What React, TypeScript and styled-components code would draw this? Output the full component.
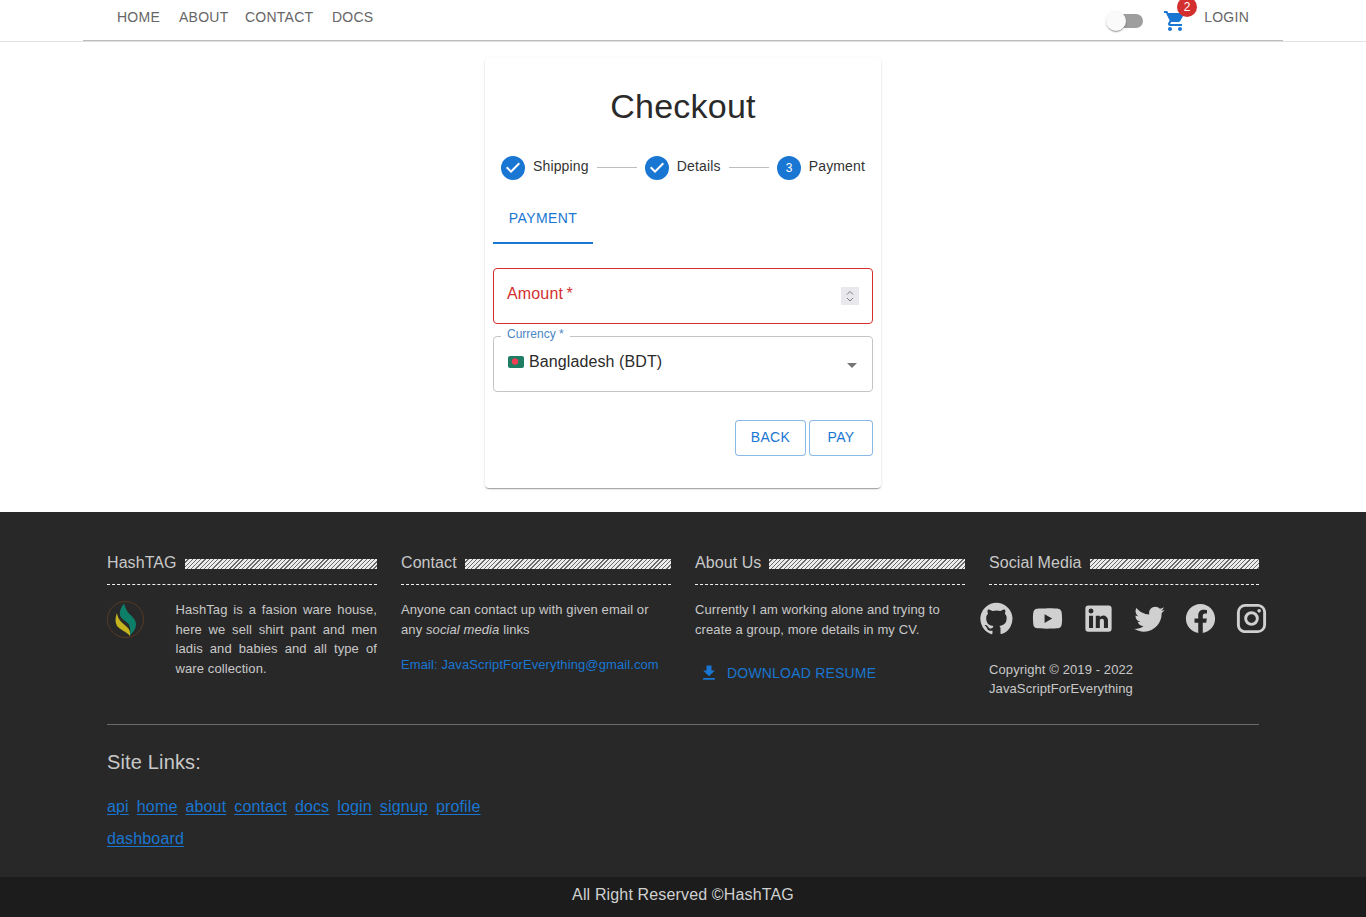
import React from "react";
import styled, { createGlobalStyle } from "styled-components";

const Global = createGlobalStyle`
  html, body { margin: 0; padding: 0; background: #fff; }
  body { font-family: "Liberation Sans", Arial, sans-serif; color: rgba(0,0,0,.87); }
  * { box-sizing: border-box; }
`;

const Page = styled.div`display: flex; flex-direction: column; min-height: 917px;`;

const HeaderBar = styled.header`height: 42px; border-bottom: 1px solid #e0e0e0;`;
const HeaderInner = styled.div`
  width: 1200px; height: 41px; margin: 0 auto; padding: 0 34px;
  border-bottom: 1px solid #bdbdbd;
  display: flex; align-items: flex-start; justify-content: space-between;
`;
const NavLinks = styled.nav`display: flex; height: 34px; align-items: center;`;
const NavLink = styled.a<{ $w: number }>`
  width: ${(p) => p.$w}px; font-size: 14px; letter-spacing: .25px; color: #666; white-space: nowrap;
`;
const HeaderRight = styled.div`display: flex; align-items: flex-start; position: relative; height: 40px;`;
const Toggle = styled.span`
  position: relative; display: block; width: 34px; height: 14px; margin: 14px 20px 0 0;
  background: #9e9e9e; border-radius: 7px;
`;
const Thumb = styled.span`
  position: absolute; left: -3px; top: -3px; width: 20px; height: 20px; border-radius: 50%;
  background: #fafafa; box-shadow: 0 2px 1px -1px rgba(0,0,0,.2), 0 1px 1px rgba(0,0,0,.14), 0 1px 3px rgba(0,0,0,.12);
`;
const CartWrap = styled.span`position: relative; display: block; width: 24px; height: 24px; margin: 9px 17px 0 0; color: #1976d2;`;
const Badge = styled.span`
  position: absolute; left: 14px; top: -12px; width: 20px; height: 20px; border-radius: 50%;
  background: #d32f2f; color: #fff; font-size: 12px; line-height: 20px; text-align: center;
`;
const Login = styled.a`font-size: 14px; letter-spacing: .25px; color: #666; margin: 9px 0 0 0; line-height: 17px;`;

const Main = styled.main`height: 470px; padding-top: 16px; display: flex; justify-content: center; align-items: flex-start;`;
const Card = styled.section`
  width: 396px; height: 430px; padding: 24px 8px 0; border-radius: 4px; background: #fff;
  box-shadow: 0 2px 1px -1px rgba(0,0,0,.2), 0 1px 1px rgba(0,0,0,.14), 0 1px 3px rgba(0,0,0,.12);
`;
const Title = styled.h1`margin: 0; font-size: 34px; font-weight: 400; line-height: 48px; text-align: center; letter-spacing: .25px; color: #2a2a2a;`;
const Stepper = styled.div`display: flex; align-items: center; padding: 0 8px; margin-top: 26px; height: 24px;`;
const StepIcon = styled.span`display: block; width: 24px; height: 24px; margin-right: 8px; color: #1976d2; flex: none;`;
const StepLabel = styled.span`font-size: 14px; letter-spacing: .15px; white-space: nowrap; margin-top: -5px; color: #333;`;
const Connector = styled.span`flex: 1; height: 1px; background: #bdbdbd; margin: -1px 8px 0;`;
const Tab = styled.div`
  width: 100px; height: 49px; margin-top: 15px; color: #1976d2; font-size: 14px; letter-spacing: .4px; text-align: center;
  line-height: 46px; border-bottom: 2px solid #1976d2;
`;
const Field = styled.div<{ $error?: boolean }>`
  position: relative; height: 56px; display: flex; align-items: center; padding: 0 13px;
  border: 1px solid ${(p) => (p.$error ? "#d32f2f" : "#c4c4c4")}; border-radius: 4px;
`;
const AmountField = styled(Field)`margin-top: 24px; justify-content: space-between;`;
const CurrencyField = styled(Field)`margin-top: 12px; justify-content: space-between;`;
const ErrorLabel = styled.span`color: #d32f2f; font-size: 16px; letter-spacing: .15px; margin-top: -4px;`;
const Spinner = styled.span`display: block; width: 18px; height: 18px; background: #e9e9ed; color: #7a7a80;`;
const Legend = styled.span`
  position: absolute; left: 7px; top: -10px; padding: 0 6px; background: #fff; font-size: 12px; line-height: 15px;
  color: #4a86c5;
`;
const Selected = styled.span`display: flex; align-items: center; gap: 5px; font-size: 16px; letter-spacing: .1px; margin: -4px 0 0 1px; color: #2a2a2a;`;
const Caret = styled.span`width: 0; height: 0; border: 5px solid transparent; border-top-color: #757575; border-bottom: 0; margin: 3px 2px 0 0;`;
const Actions = styled.div`display: flex; justify-content: flex-end; gap: 3px; margin-top: 28px;`;
const OutlineButton = styled.button<{ $w: number }>`
  width: ${(p) => p.$w}px; height: 36px; background: #fff; border: 1px solid rgba(25,118,210,.5); border-radius: 4px; color: #1976d2;
  font: 400 14px "Liberation Sans", Arial, sans-serif; letter-spacing: .3px; padding: 0 0 2px;
`;

const Footer = styled.footer`background: #282828; height: 365px; padding: 40px 107px 0; color: #c8c8c8;`;
const Columns = styled.div`display: grid; grid-template-columns: repeat(4, 270px); gap: 24px; height: 173px; border-bottom: 1px solid #6b6b6b;`;
const Col = styled.div``;
const ColHead = styled.div`
  display: flex; align-items: center; gap: 8px; height: 33px; padding-bottom: 9px; border-bottom: 1px dashed #f0f0f0;
  margin-bottom: 15px;
`;
const HeadText = styled.span`font-size: 16px; white-space: nowrap; letter-spacing: .08px; margin-top: -2px;`;
const Hatch = styled.span`
  flex: 1; height: 10px;
  background: repeating-linear-gradient(135deg, #ececec 0 2px, #6a6a6a 2px 3px);
`;
const AboutRow = styled.div`display: flex;`;
const Logo = styled.svg`width: 37px; height: 37px; flex: none; margin: 1px 31.5px 0 0;`;
const Para = styled.p<{ $justify?: boolean }>`
  margin: 0; font-size: 13px; line-height: 19.5px; letter-spacing: .1px; text-align: ${(p) => (p.$justify ? "justify" : "left")};
`;
const Email = styled.p`margin: 16px 0 0; font-size: 13px; line-height: 19.5px; letter-spacing: .1px; color: #1976d2;`;
const Download = styled.div`display: flex; align-items: center; gap: 8px; margin: 16px 0 0 4px; height: 36px; color: #1976d2; font-size: 14px; letter-spacing: .2px;`;
const Social = styled.div`display: flex; justify-content: center; margin-top: -7px;`;
const SocialBtn = styled.span`display: block; flex: none; width: 51px; height: 51px; padding: 8px; color: #d0d0d0;`;
const Copy = styled.p`margin: 16px 0 0; font-size: 13px; line-height: 19px; letter-spacing: .1px;`;
const SiteHead = styled.h6`margin: 25px 0 0; font-size: 20px; font-weight: 400; line-height: 24px; letter-spacing: .15px;`;
const SiteLinks = styled.div`display: flex; flex-wrap: wrap; column-gap: 8px; row-gap: 8px; width: 384px; margin-top: 21px;`;
const SiteLink = styled.a`font-size: 16px; line-height: 24px; letter-spacing: .15px; color: #1976d2; text-decoration: underline; text-underline-offset: 2px;`;
const Bottom = styled.div`height: 40px; background: #1c1c1c; color: #d0d0d0; font-size: 16px; letter-spacing: .15px; text-align: center; line-height: 36px;`;

const Icon = ({ d, size = "100%" }: { d: string; size?: string | number }) => (
  <svg viewBox="0 0 24 24" width={size} height={size} fill="currentColor" style={{ display: "block" }}><path d={d} /></svg>
);

const P = {
  cart: "M7 18c-1.1 0-1.99.9-1.99 2S5.9 22 7 22s2-.9 2-2-.9-2-2-2zM1 2v2h2l3.6 7.59-1.35 2.45c-.16.28-.25.61-.25.96 0 1.1.9 2 2 2h12v-2H7.42c-.14 0-.25-.11-.25-.25l.03-.12.9-1.63h7.45c.75 0 1.41-.41 1.75-1.03l3.58-6.49c.08-.14.12-.31.12-.48 0-.55-.45-1-1-1H5.21l-.94-2H1zm16 16c-1.1 0-1.99.9-1.99 2s.89 2 1.99 2 2-.9 2-2-.9-2-2-2z",
  check: "M12 0a12 12 0 1 0 0 24 12 12 0 0 0 0-24zm-2 17l-5-5 1.4-1.4 3.6 3.6 7.6-7.6L19 8l-9 9z",
  download: "M5 20h14v-2H5v2zM19 9h-4V3H9v6H5l7 7 7-7z",
  github: "M12 1.27a11 11 0 00-3.48 21.46c.55.09.73-.28.73-.55v-1.84c-3.03.64-3.67-1.5-3.67-1.5-.55-1.29-1.28-1.65-1.28-1.65-.92-.65.1-.65.1-.65 1.1 0 1.73 1.1 1.73 1.1.92 1.65 2.57 1.2 3.21.92a2 2 0 01.64-1.47c-2.47-.27-5.04-1.19-5.04-5.5 0-1.1.46-2.1 1.2-2.84a3.76 3.76 0 010-2.93s.91-.28 3.11 1.1c1.8-.49 3.7-.49 5.5 0 2.1-1.38 3.02-1.1 3.02-1.1a3.76 3.76 0 010 2.93c.83.74 1.2 1.74 1.2 2.94 0 4.21-2.57 5.13-5.04 5.4.45.37.82.92.82 2.02v3.03c0 .27.1.64.73.55A11 11 0 0012 1.27",
  youtube: "M10 15l5.19-3L10 9v6m11.56-7.83c.13.47.22 1.1.28 1.9.07.8.1 1.49.1 2.09L22 12c0 2.19-.16 3.8-.44 4.83-.25.9-.83 1.48-1.73 1.73-.47.13-1.33.22-2.65.28-1.3.07-2.49.1-3.59.1L12 19c-4.19 0-6.8-.16-7.83-.44-.9-.25-1.48-.83-1.73-1.73-.13-.47-.22-1.1-.28-1.9-.07-.8-.1-1.49-.1-2.09L2 12c0-2.19.16-3.8.44-4.83.25-.9.83-1.48 1.73-1.73.47-.13 1.33-.22 2.65-.28 1.3-.07 2.49-.1 3.59-.1L12 5c4.19 0 6.8.16 7.83.44.9.25 1.48.83 1.73 1.73z",
  linkedin: "M19 3a2 2 0 0 1 2 2v14a2 2 0 0 1-2 2H5a2 2 0 0 1-2-2V5a2 2 0 0 1 2-2h14m-.5 15.5v-5.3a3.26 3.26 0 0 0-3.26-3.26c-.85 0-1.84.52-2.32 1.3v-1.11h-2.79v8.37h2.79v-4.93c0-.77.62-1.4 1.39-1.4a1.4 1.4 0 0 1 1.4 1.4v4.93h2.79M6.88 8.56a1.68 1.68 0 0 0 1.68-1.68c0-.93-.75-1.69-1.68-1.69a1.69 1.69 0 0 0-1.69 1.69c0 .93.76 1.68 1.69 1.68m1.39 9.94v-8.37H5.5v8.37h2.77z",
  twitter: "M22.46 6c-.77.35-1.6.58-2.46.69.88-.53 1.56-1.37 1.88-2.38-.83.5-1.75.85-2.72 1.05C18.37 4.5 17.26 4 16 4c-2.35 0-4.27 1.92-4.27 4.29 0 .34.04.67.11.98C8.28 9.09 5.11 7.38 3 4.79c-.37.63-.58 1.37-.58 2.15 0 1.49.75 2.81 1.91 3.56-.71 0-1.37-.2-1.95-.5v.03c0 2.08 1.48 3.82 3.44 4.21a4.22 4.22 0 0 1-1.93.07 4.28 4.28 0 0 0 4 2.98 8.521 8.521 0 0 1-5.33 1.84c-.34 0-.68-.02-1.02-.06C3.44 20.29 5.7 21 8.12 21 16 21 20.33 14.46 20.33 8.79c0-.19 0-.37-.01-.56.84-.6 1.56-1.36 2.14-2.23z",
  facebook: "M12 2.04c-5.5 0-10 4.49-10 10.02 0 5 3.66 9.15 8.44 9.9v-7H7.9v-2.9h2.54V9.85c0-2.51 1.49-3.89 3.78-3.89 1.09 0 2.23.19 2.23.19v2.47h-1.26c-1.24 0-1.63.77-1.63 1.56v1.88h2.78l-.45 2.9h-2.33v7a10 10 0 0 0 8.44-9.9c0-5.53-4.5-10.02-10-10.02z",
  instagram: "M7.8 2h8.4C19.4 2 22 4.6 22 7.8v8.4a5.8 5.8 0 0 1-5.8 5.8H7.8C4.6 22 2 19.4 2 16.2V7.8A5.8 5.8 0 0 1 7.8 2m-.2 2A3.6 3.6 0 0 0 4 7.6v8.8C4 18.39 5.61 20 7.6 20h8.8a3.6 3.6 0 0 0 3.6-3.6V7.6C20 5.61 18.39 4 16.4 4H7.6m9.65 1.5a1.25 1.25 0 0 1 1.25 1.25A1.25 1.25 0 0 1 17.25 8 1.25 1.25 0 0 1 16 6.75a1.25 1.25 0 0 1 1.25-1.25M12 7a5 5 0 0 1 5 5 5 5 0 0 1-5 5 5 5 0 0 1-5-5 5 5 0 0 1 5-5m0 2a3 3 0 0 0-3 3 3 3 0 0 0 3 3 3 3 0 0 0 3-3 3 3 0 0 0-3-3z",
};

const StepNum = () => (
  <svg viewBox="0 0 24 24" width="24" height="24" style={{ display: "block" }}>
    <circle cx="12" cy="12" r="12" fill="#1976d2" />
    <text x="12" y="15.5" fontSize="12" fill="#fff" textAnchor="middle">3</text>
  </svg>
);

const HeadRow = ({ title }: { title: string }) => (
  <ColHead><HeadText>{title}</HeadText><Hatch /></ColHead>
);

const links = ["api", "home", "about", "contact", "docs", "login", "signup", "profile", "dashboard"];
const socials = [P.github, P.youtube, P.linkedin, P.twitter, P.facebook, P.instagram];

export default function App() {
  return (
    <Page>
      <Global />
      <HeaderBar>
        <HeaderInner>
          <NavLinks>
            <NavLink $w={62}>HOME</NavLink>
            <NavLink $w={66}>ABOUT</NavLink>
            <NavLink $w={87}>CONTACT</NavLink>
            <NavLink $w={42}>DOCS</NavLink>
          </NavLinks>
          <HeaderRight>
            <Toggle><Thumb /></Toggle>
            <CartWrap><Icon d={P.cart} /><Badge>2</Badge></CartWrap>
            <Login>LOGIN</Login>
          </HeaderRight>
        </HeaderInner>
      </HeaderBar>
      <Main>
        <Card>
          <Title>Checkout</Title>
          <Stepper>
            <StepIcon><Icon d={P.check} /></StepIcon>
            <StepLabel>Shipping</StepLabel>
            <Connector />
            <StepIcon><Icon d={P.check} /></StepIcon>
            <StepLabel>Details</StepLabel>
            <Connector />
            <StepIcon><StepNum /></StepIcon>
            <StepLabel>Payment</StepLabel>
          </Stepper>
          <Tab>PAYMENT</Tab>
          <AmountField $error>
            <ErrorLabel>Amount{"\u2009"}*</ErrorLabel>
            <Spinner>
              <svg viewBox="0 0 18 18" width="18" height="18" fill="none" stroke="currentColor" strokeWidth="1" style={{ display: "block" }}>
                <path d="M6 7.5 9 4.5 12 7.5M6 11 9 14 12 11" />
              </svg>
            </Spinner>
          </AmountField>
          <CurrencyField>
            <Legend>Currency *</Legend>
            <Selected>
              <svg viewBox="0 0 16 12" width="16" height="12" style={{ display: "block" }}>
                <rect width="16" height="12" rx="2" fill="#1f7d64" />
                <circle cx="7" cy="5.5" r="3.2" fill="#ee3f55" />
              </svg>
              Bangladesh (BDT)
            </Selected>
            <Caret />
          </CurrencyField>
          <Actions>
            <OutlineButton $w={71}>BACK</OutlineButton>
            <OutlineButton $w={64}>PAY</OutlineButton>
          </Actions>
        </Card>
      </Main>
      <Footer>
        <Columns>
          <Col>
            <HeadRow title="HashTAG" />
            <AboutRow>
              <Logo viewBox="0 0 37 37">
                <circle cx="18.5" cy="18.5" r="18" fill="none" stroke="#5a3a22" strokeWidth="1" />
                <path d="M10 12c-2 5-2 9 0 13 3 4 9 5 13 10 .5-3 0-6-2-8-4-4-10-7-11-15z" fill="#c4b41e" />
                <path d="M17 2.5c-3 4-5 8-4 12 1.5 4 6 5 9 9 1.5 3 1.5 7 1 11 3-3 6-7 6-11 0-5-4-8-8-12-2-3-3-6-4-9z" fill="#0d7f68" />
              </Logo>
              <Para $justify>HashTag is a fasion ware house, here we sell shirt pant and men ladis and babies and all type of ware collection.</Para>
            </AboutRow>
          </Col>
          <Col>
            <HeadRow title="Contact" />
            <Para>Anyone can contact up with given email or any <i>social media</i> links</Para>
            <Email>Email: JavaScriptForEverything@gmail.com</Email>
          </Col>
          <Col>
            <HeadRow title="About Us" />
            <Para>Currently I am working alone and trying to create a group, more details in my CV.</Para>
            <Download><Icon d={P.download} size={20} />DOWNLOAD RESUME</Download>
          </Col>
          <Col>
            <HeadRow title="Social Media" />
            <Social>
              {socials.map((d) => (<SocialBtn key={d}><Icon d={d} /></SocialBtn>))}
            </Social>
            <Copy>Copyright © 2019 - 2022<br />JavaScriptForEverything</Copy>
          </Col>
        </Columns>
        <SiteHead>Site Links:</SiteHead>
        <SiteLinks>
          {links.map((l) => (<SiteLink key={l}>{l}</SiteLink>))}
        </SiteLinks>
      </Footer>
      <Bottom>All Right Reserved ©HashTAG</Bottom>
    </Page>
  );
}
